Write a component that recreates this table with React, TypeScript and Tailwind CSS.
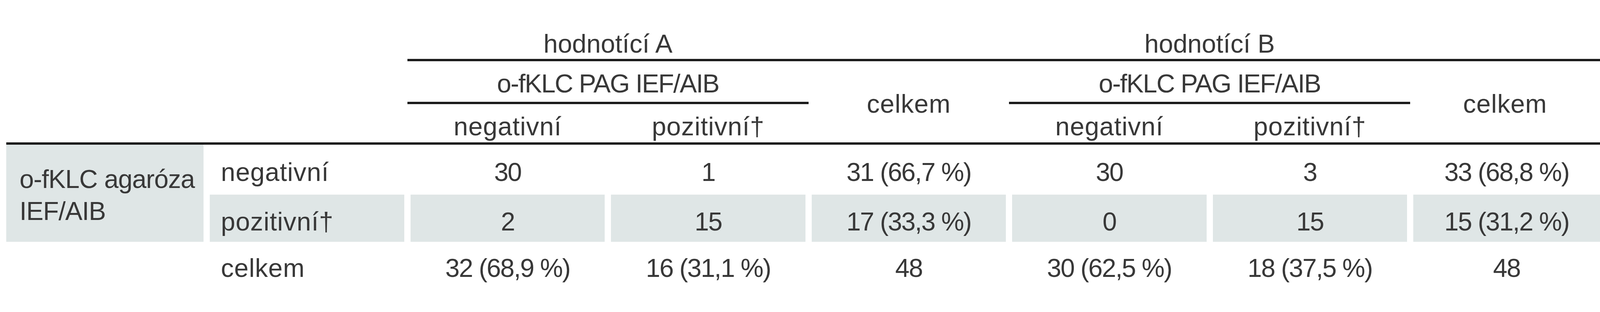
import React from 'react'

const rows = [
  { label: 'negativní', values: ['30', '1', '31 (66,7 %)', '30', '3', '33 (68,8 %)'], shaded: false, pad: 'pt-[32px]' },
  { label: 'pozitivní†', values: ['2', '15', '17 (33,3 %)', '0', '15', '15 (31,2 %)'], shaded: true, pad: 'pt-[31px]' },
  { label: 'celkem', values: ['32 (68,9 %)', '16 (31,1 %)', '48', '30 (62,5 %)', '18 (37,5 %)', '48'], shaded: false, pad: 'pt-[29px]' },
]

const rowPlace = ['row-start-1', 'row-start-2', 'row-start-3']
const colPlace = ['col-start-3', 'col-start-4', 'col-start-5', 'col-start-6', 'col-start-7', 'col-start-8']

const line = 'border-b-[6px] border-[#1c1c1c]'
const word = 'tracking-[1px]'

export default function App() {
  return (
    <div className="w-full h-[800px] bg-white text-[#383838] text-[66px] leading-[76px] font-['Liberation_Sans',Arial,sans-serif] overflow-hidden">
      {/* header */}
      <div className="grid grid-cols-[repeat(7,540fr)_511fr] grid-rows-[157px_110px_98px] pl-[16px]">
        <div className="col-start-1 col-span-2 row-start-1 row-span-3" />

        <div className={`col-start-3 col-span-2 row-start-1 flex items-end justify-center pb-[1px] ${line}`}>hodnotící A</div>
        <div className={`col-start-5 row-start-1 ${line}`} />
        <div className={`col-start-6 col-span-2 row-start-1 flex items-end justify-center pb-[1px] ${line}`}>hodnotící B</div>
        <div className={`col-start-8 row-start-1 ${line}`} />

        <div className={`col-start-3 col-span-2 row-start-2 flex items-end justify-center pb-[9px] tracking-[-2px] ${line}`}>o-fKLC PAG IEF/AIB</div>
        <div className={`col-start-5 row-start-2 row-span-2 flex items-center justify-center pt-[10px] ${word}`}>celkem</div>
        <div className={`col-start-6 col-span-2 row-start-2 flex items-end justify-center pb-[9px] tracking-[-2px] ${line}`}>o-fKLC PAG IEF/AIB</div>
        <div className={`col-start-8 row-start-2 row-span-2 flex items-center justify-center pt-[10px] ${word}`}>celkem</div>

        <div className={`col-start-3 row-start-3 flex items-end justify-center pb-[3px] ${word}`}>negativní</div>
        <div className={`col-start-4 row-start-3 flex items-end justify-center pb-[3px] ${word}`}>pozitivní†</div>
        <div className={`col-start-6 row-start-3 flex items-end justify-center pb-[3px] ${word}`}>negativní</div>
        <div className={`col-start-7 row-start-3 flex items-end justify-center pb-[3px] ${word}`}>pozitivní†</div>
      </div>

      <div className="ml-[16px] h-[6px] bg-[#1c1c1c]" />

      {/* body */}
      <div className="grid grid-cols-[repeat(7,540fr)_511fr] grid-rows-[128px_121px_140px] pl-[16px]">
        <div className="col-start-1 row-start-1 row-span-2 pr-[8px]">
          <div className="h-full bg-[#dfe6e6] pl-[34px] pt-[47px] leading-[82px] tracking-[-1px]">
            o-fKLC agaróza
            <br />
            IEF/AIB
          </div>
        </div>

        {rows.map((row, r) => (
          <React.Fragment key={row.label}>
            <div className={`col-start-2 ${rowPlace[r]} px-[8px]`}>
              <div className={`h-full pl-[28px] ${word} ${row.pad} ${row.shaded ? 'bg-[#dfe6e6]' : ''}`}>{row.label}</div>
            </div>
            {row.values.map((v, i) => (
              <div key={i} className={`${colPlace[i]} ${rowPlace[r]} ${i === 5 ? 'pl-[8px]' : 'px-[8px]'}`}>
                <div className={`h-full text-center tracking-[-2px] ${row.pad} ${row.shaded ? 'bg-[#dfe6e6]' : ''}`}>{v}</div>
              </div>
            ))}
          </React.Fragment>
        ))}
      </div>
    </div>
  )
}
